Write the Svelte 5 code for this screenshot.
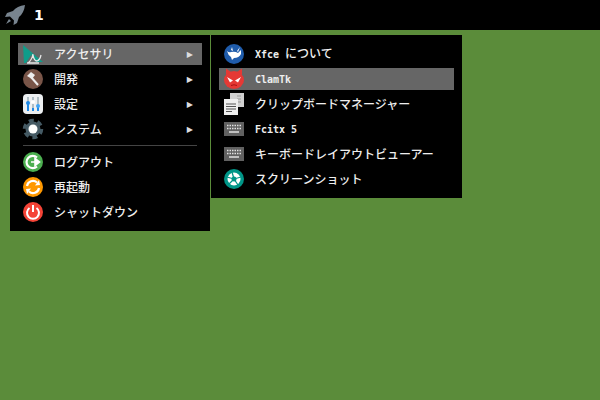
<script>
	const mainTop = [
		{ icon: 'accessory', label: 'アクセサリ', active: true },
		{ icon: 'hammer', label: '開発' },
		{ icon: 'settings', label: '設定' },
		{ icon: 'gear', label: 'システム' }
	];
	const mainBottom = [
		{ icon: 'logout', label: 'ログアウト' },
		{ icon: 'restart', label: '再起動' },
		{ icon: 'power', label: 'シャットダウン' }
	];
	// latin = the part drawn in the small mono face
	const sub = [
		{ icon: 'xfce', latin: 'Xfce ', label: 'について' },
		{ icon: 'clam', latin: 'ClamTk', label: '', active: true },
		{ icon: 'clip', label: 'クリップボードマネージャー' },
		{ icon: 'keyboard', latin: 'Fcitx 5', label: '' },
		{ icon: 'keyboard', label: 'キーボードレイアウトビューアー' },
		{ icon: 'shot', label: 'スクリーンショット' }
	];
</script>

{#snippet icon(name)}
	<svg class="icon" viewBox="0 0 22 22" width="22" height="22">
		{#if name === 'accessory'}
			<path d="M1 2 L21 19 L14 19 L9 12 L4 20 L2 20 Z" fill="#0f9d8a" />
			<path d="M6 20 Q10 17 11 11 M11 12 Q12 18 15 18 Q18 17 19 12 M5 20 H17" fill="none" stroke="#e6e6e6" stroke-width="1.300" />
		{:else if name === 'hammer'}
			<circle cx="11" cy="11" r="10" fill="#795548" />
			<path d="M9 9 L16 17" stroke="#eee" stroke-width="2" />
			<path d="M5 8 L9 4 L13 7 L10 11 Z" fill="#eee" />
		{:else if name === 'settings'}
			<rect x="1" y="1" width="20" height="20" rx="4" fill="#eceff1" />
			<path d="M6 4 V18 M11 4 V18 M16 4 V18" stroke="#b0bec5" stroke-width="2" />
			<path d="M6 11 V18 M11 15 V18 M16 12 V18" stroke="#1e88e5" stroke-width="2" />
			<circle cx="6" cy="10" r="2" fill="#1e88e5" />
			<circle cx="11" cy="9" r="2" fill="#fff" />
			<circle cx="16" cy="13" r="2" fill="#42a5f5" />
		{:else if name === 'gear'}
			<circle cx="11" cy="11" r="7.500" fill="#455a64" />
			<circle cx="11" cy="11" r="8.500" fill="none" stroke="#455a64" stroke-width="3.500" stroke-dasharray="5 3.900" />
			<circle cx="11" cy="11" r="4.500" fill="#fff" />
		{:else if name === 'logout'}
			<circle cx="11" cy="11" r="10" fill="#4caf50" />
			<path d="M15 6.500 A6.200 6.200 0 1 0 15 15.500" fill="none" stroke="#fff" stroke-width="2.200" />
			<path d="M9 11 H15 M13 7.500 L17.500 11 L13 14.500 Z" fill="#fff" stroke="#fff" stroke-width="1.600" />
		{:else if name === 'restart'}
			<circle cx="11" cy="11" r="10" fill="#ff9800" />
			<path d="M5 10 A6 6 0 0 1 15 6.500" fill="none" stroke="#fff" stroke-width="2.200" />
			<path d="M17 12 A6 6 0 0 1 7 15.500" fill="none" stroke="#fff" stroke-width="2.200" />
			<path d="M13 9.500 L18 9 L17 4 Z M9 12.500 L4 13 L5 18 Z" fill="#fff" />
		{:else if name === 'power'}
			<circle cx="11" cy="11" r="10" fill="#f44336" />
			<path d="M7.500 7 A6 6 0 1 0 14.500 7" fill="none" stroke="#fff" stroke-width="2" />
			<path d="M11 4 V11" stroke="#fff" stroke-width="2" />
		{:else if name === 'xfce'}
			<circle cx="11" cy="11" r="10" fill="#1f5cab" />
			<path d="M4 8 Q6 10 8 9 Q12 8 15 10 L18 7 L18 11 Q16 15 11 15 L9 17 L8 14 Q5 12 4 8 Z" fill="#fff" />
			<path d="M8 7 L9 4 L10 8 Z M14 8 L17 4 L15 9 Z" fill="#fff" />
		{:else if name === 'clam'}
			<path d="M3 7 L3 0.500 L8 4 Z M19 7 L19 0.500 L14 4 Z" fill="#e53935" />
			<ellipse cx="11" cy="12" rx="10" ry="9" fill="#e53935" />
			<path d="M4 9 L10 12.500 L7 14.500 Z M18 9 L12 12.500 L15 14.500 Z" fill="#fff" />
			<path d="M8 17.500 Q11 16 14 17.500" fill="none" stroke="#a11" stroke-width="1" />
		{:else if name === 'clip'}
			<path d="M7 0 H21 V14 H7 Z" fill="#d0d0d0" />
			<path d="M14 3 H18 M14 6 H18 M14 9 H18" stroke="#999" />
			<path d="M1 6 H15 V22 H1 Z" fill="#eeeeee" />
			<path d="M3 11 H13 M3 13.500 H13 M3 16 H13 M3 18.500 H9" stroke="#555" stroke-width="1.200" />
		{:else if name === 'keyboard'}
			<rect x="1" y="4" width="20" height="14" fill="#616161" />
			<path d="M4 7.500 H18 M4 10.500 H18" stroke="#e0e0e0" stroke-width="1.500" stroke-dasharray="1.500 1" />
			<path d="M6 14 H16" stroke="#e0e0e0" stroke-width="1.500" />
		{:else if name === 'shot'}
			<circle cx="11" cy="11" r="10" fill="#009688" />
			<circle cx="11" cy="11" r="6.500" fill="#fff" />
			<path d="M11 11 L9 4 M11 11 L18 9 M11 11 L15 17 M11 11 L6 16 M11 11 L4 9" stroke="#009688" stroke-width="1.300" />
			<circle cx="11" cy="11" r="2.500" fill="#009688" />
		{/if}
	</svg>
{/snippet}

<div class="screen">
	<header class="panel">
		<svg class="rocket" viewBox="0 0 22 22" width="22" height="22">
			<path d="M21 1 Q13 2 9 7 L3 9 L1 13 L6 12.500 L10 16.500 L9.500 21 L13 19 L15 13 Q20 9 21 1 Z" fill="#78848f" />
			<path d="M5 15 L7 17 L2 20 Z" fill="#78848f" />
		</svg>
		<span class="workspace">1</span>
	</header>

	<div class="menus">
		<nav class="menu main">
			{#each mainTop as item}
				<div class="row" class:active={item.active}>
					{@render icon(item.icon)}
					<span class="label">{item.label}</span>
					<span class="arrow">▶</span>
				</div>
			{/each}
			<div class="sep"></div>
			{#each mainBottom as item}
				<div class="row">
					{@render icon(item.icon)}
					<span class="label">{item.label}</span>
				</div>
			{/each}
		</nav>

		<nav class="menu sub">
			{#each sub as item}
				<div class="row" class:active={item.active}>
					{@render icon(item.icon)}
					<span class="label">{#if item.latin}<span class="latin">{item.latin}</span>{/if}{item.label}</span>
				</div>
			{/each}
		</nav>
	</div>
</div>

<style>
	:global(body) {
		margin: 0;
	}

	.screen {
		width: 600px;
		height: 400px;
		background: #5b8c3a;
		overflow: hidden;
		font-family: "Noto Sans CJK JP", "DejaVu Sans", sans-serif;
		font-size: 12px;
		font-weight: 500;
		color: #eee;
	}

	.panel {
		display: flex;
		align-items: center;
		height: 30px;
		background: #000;
		padding-left: 4px;
		gap: 8px;
	}

	.workspace {
		font-family: "DejaVu Sans", sans-serif;
		font-weight: bold;
		font-size: 14px;
		color: #fff;
	}

	.menus {
		display: flex;
		align-items: flex-start;
		gap: 1px;
		padding: 5px 0 0 10px;
	}

	.menu {
		display: flex;
		flex-direction: column;
		gap: 3px;
		background: #000;
		padding: 8px;
		box-sizing: border-box;
	}

	.main {
		width: 200px;
	}

	.sub {
		width: 251px;
	}

	.row {
		display: flex;
		align-items: center;
		height: 22px;
		padding-left: 4px;
		gap: 10px;
	}

	.row.active {
		background: #666;
	}

	.icon {
		flex: none;
	}

	.label {
		flex: 1;
		white-space: pre;
		line-height: 14px;
		padding-bottom: 1px;
	}

	.latin {
		font-family: "DejaVu Sans Mono", monospace;
		font-size: 10px;
		font-weight: bold;
	}

	.arrow {
		font-family: "DejaVu Sans", sans-serif;
		font-size: 8px;
		padding-right: 9px;
		color: #ddd;
	}

	.sep {
		flex: none;
		height: 1px;
		background: #444;
		margin: 2px 5px;
	}
</style>
